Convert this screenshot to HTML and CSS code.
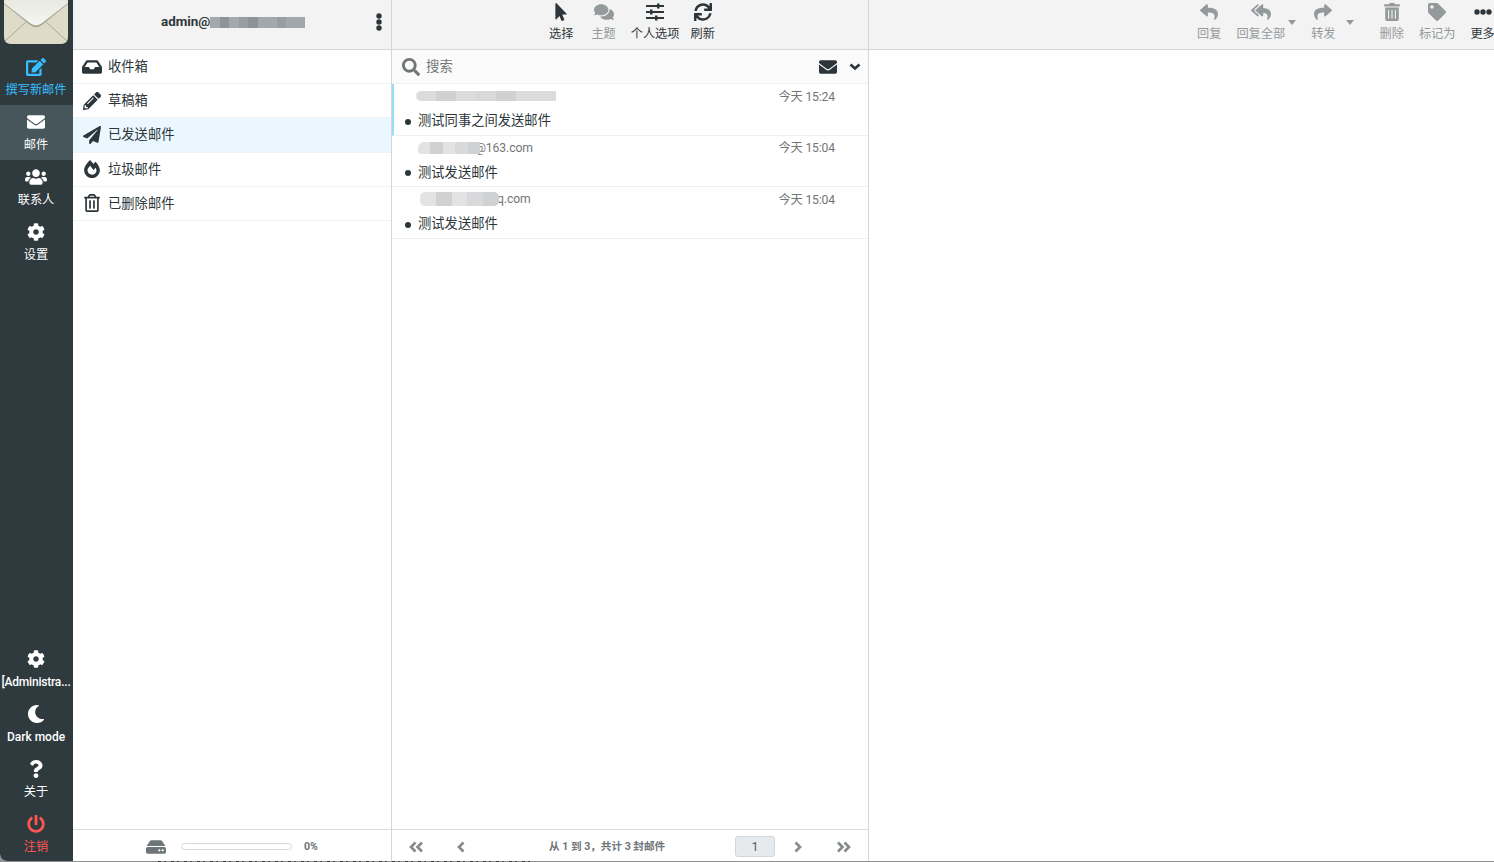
FILE: index.html
```html
<!DOCTYPE html>
<html lang="zh-CN">
<head>
<meta charset="utf-8">
<title>已发送邮件</title>
<link rel="stylesheet" href="styles.css">
</head>
<body>
<svg class="defs" aria-hidden="true">
  <symbol id="edit" viewBox="0 0 576 512"><path d="M402.6 83.2l90.2 90.2c3.8 3.8 3.8 10 0 13.8L274.4 405.6l-92.8 10.3c-12.4 1.4-22.9-9.1-21.5-21.5l10.3-92.8L388.8 83.2c3.8-3.8 10-3.8 13.8 0zm162-22.9l-48.8-48.8c-15.2-15.2-39.9-15.2-55.2 0l-35.4 35.4c-3.8 3.8-3.8 10 0 13.8l90.2 90.2c3.8 3.8 10 3.8 13.8 0l35.4-35.4c15.2-15.3 15.2-40 0-55.2zM384 346.2V448H64V128h229.8c3.2 0 6.2-1.3 8.5-3.5l40-40c7.6-7.6 2.2-20.5-8.5-20.5H48C21.5 64 0 85.5 0 112v352c0 26.5 21.5 48 48 48h352c26.5 0 48-21.5 48-48V306.2c0-10.7-12.9-16-20.5-8.5l-40 40c-2.2 2.3-3.5 5.3-3.5 8.5z"/></symbol>
  <symbol id="envelope" viewBox="0 0 512 512"><path d="M502.3 190.8c3.9-3.1 9.7-.2 9.7 4.7V400c0 26.500-21.500 48-48 48H48c-26.500 0-48-21.500-48-48V195.600c0-5 5.700-7.800 9.700-4.700 22.400 17.400 52.100 39.500 154.100 113.600 21.100 15.400 56.700 47.800 92.200 47.600 35.700.3 72-32.800 92.300-47.600 102-74.100 131.600-96.300 154-113.700zM256 320c23.200.4 56.600-29.200 73.400-41.400 132.700-96.300 142.800-104.700 173.400-128.700 5.800-4.500 9.200-11.500 9.200-18.900v-19c0-26.500-21.500-48-48-48H48c-26.500 0-48 21.500-48 48v19c0 7.400 3.400 14.300 9.200 18.900 30.600 23.900 40.700 32.400 173.400 128.700 16.800 12.200 50.200 41.800 73.400 41.400z"/></symbol>
  <symbol id="users" viewBox="0 0 640 512"><path d="M96 224c35.300 0 64-28.700 64-64s-28.700-64-64-64-64 28.700-64 64 28.700 64 64 64zm448 0c35.300 0 64-28.700 64-64s-28.700-64-64-64-64 28.700-64 64 28.700 64 64 64zm32 32h-64c-17.600 0-33.500 7.100-45.100 18.600 40.300 22.100 68.900 62 75.100 109.400h66c17.700 0 32-14.300 32-32v-32c0-35.300-28.700-64-64-64zm-256 0c61.900 0 112-50.100 112-112S381.900 32 320 32 208 82.100 208 144s50.100 112 112 112zm76.800 32h-8.300c-20.800 10-43.900 16-68.500 16s-47.600-6-68.500-16h-8.300C179.600 288 128 339.600 128 403.200V432c0 26.500 21.500 48 48 48h288c26.500 0 48-21.500 48-48v-28.800c0-63.600-51.600-115.200-115.200-115.200zm-223.700-13.400C161.500 263.100 145.600 256 128 256H64c-35.300 0-64 28.700-64 64v32c0 17.700 14.300 32 32 32h65.900c6.300-47.400 34.900-87.300 75.200-109.400z"/></symbol>
  <symbol id="cog" viewBox="0 0 512 512"><path d="M487.4 315.7l-42.6-24.6c4.3-23.2 4.3-47 0-70.2l42.6-24.6c4.9-2.8 7.1-8.6 5.5-14-11.1-35.6-30-67.8-54.7-94.6-3.8-4.1-10-5.1-14.8-2.3L380.8 110c-17.9-15.4-38.5-27.3-60.8-35.1V25.8c0-5.6-3.9-10.5-9.4-11.7-36.7-8.2-74.3-7.8-109.2 0-5.5 1.2-9.4 6.1-9.4 11.7V75c-22.2 7.9-42.8 19.8-60.8 35.1L88.7 85.5c-4.9-2.8-11-1.9-14.8 2.3-24.7 26.7-43.6 58.9-54.7 94.6-1.7 5.4.6 11.2 5.5 14L67.3 221c-4.3 23.2-4.3 47 0 70.2l-42.6 24.6c-4.9 2.8-7.1 8.6-5.5 14 11.1 35.6 30 67.8 54.7 94.6 3.8 4.1 10 5.1 14.8 2.3l42.6-24.6c17.9 15.4 38.5 27.3 60.8 35.1v49.2c0 5.6 3.9 10.5 9.4 11.7 36.7 8.2 74.3 7.8 109.2 0 5.5-1.2 9.4-6.1 9.4-11.7v-49.2c22.2-7.9 42.8-19.8 60.8-35.1l42.6 24.6c4.900 2.800 11 1.900 14.800-2.300 24.700-26.700 43.600-58.900 54.700-94.600 1.500-5.500-.7-11.300-5.600-14.100zM256 336c-44.100 0-80-35.900-80-80s35.900-80 80-80 80 35.900 80 80-35.900 80-80 80z"/></symbol>
  <symbol id="moon" viewBox="0 0 512 512"><path d="M283.211 512c78.962 0 151.079-35.925 198.857-94.792 7.068-8.708-.639-21.430-11.562-19.350-124.203 23.654-238.262-71.576-238.262-196.954 0-72.222 38.662-138.635 101.498-174.394 9.686-5.512 7.250-20.197-3.756-22.230A258.156 258.156 0 0 0 283.211 0c-141.309 0-256 114.511-256 256 0 141.309 114.511 256 256 256z"/></symbol>
  <symbol id="question" viewBox="0 0 384 512"><path d="M202.021 0C122.202 0 70.503 32.703 29.914 91.026c-7.363 10.580-5.093 25.086 5.178 32.874l43.138 32.709c10.373 7.865 25.132 6.026 33.253-4.148 25.049-31.381 43.630-49.449 82.757-49.449 30.764 0 68.816 19.799 68.816 49.631 0 22.552-18.617 34.134-48.993 51.164-35.423 19.860-82.299 44.576-82.299 106.405V320c0 13.255 10.745 24 24 24h72.471c13.255 0 24-10.745 24-24v-5.773c0-42.860 125.268-44.645 125.268-160.627C377.504 66.256 286.902 0 202.021 0zM192 373.459c-38.196 0-69.271 31.075-69.271 69.271 0 38.195 31.075 69.270 69.271 69.270s69.271-31.075 69.271-69.271-31.075-69.270-69.271-69.270z"/></symbol>
  <symbol id="power" viewBox="0 0 512 512"><path d="M400 54.100c63 45 104 118.600 104 201.900 0 136.800-110.800 247.700-247.500 248C120 504.300 8.200 393 8 256.400 7.900 173.100 48.900 99.300 111.800 54.200c11.700-8.300 28-4.800 35 7.700L162.600 90c5.900 10.500 3.100 23.800-6.600 31-41.500 30.800-68 79.600-68 134.900-.1 92.300 74.500 168.100 168 168.100 91.600 0 168.600-74.200 168-169.100-.3-51.800-24.700-101.800-68.100-134-9.700-7.200-12.400-20.500-6.500-30.900l15.800-28.100c7-12.400 23.200-16.100 34.800-7.800zM296 264V24c0-13.300-10.700-24-24-24h-32c-13.300 0-24 10.700-24 24v240c0 13.300 10.700 24 24 24h32c13.300 0 24-10.700 24-24z"/></symbol>
  <symbol id="inbox" viewBox="0 0 576 512"><path d="M567.938 243.908L462.250 85.374A48.003 48.003 0 0 0 422.311 64H153.689a48 48 0 0 0-39.938 21.374L8.062 243.908A47.994 47.994 0 0 0 0 270.533V400c0 26.510 21.490 48 48 48h480c26.510 0 48-21.490 48-48V270.533a47.994 47.994 0 0 0-8.062-26.625zM162.252 128h251.497l85.333 128H376l-32 64H232l-32-64H76.918l85.334-128z"/></symbol>
  <symbol id="pencil" viewBox="0 0 512 512"><path d="M497.900 142.100l-46.100 46.100c-4.700 4.700-12.300 4.700-17 0l-111-111c-4.700-4.700-4.700-12.300 0-17l46.100-46.100c18.700-18.700 49.100-18.700 67.900 0l60.100 60.100c18.800 18.700 18.800 49.100 0 67.900zM284.200 99.800L21.600 362.400.4 483.900c-2.900 16.400 11.400 30.600 27.800 27.800l121.500-21.300 262.600-262.600c4.700-4.700 4.700-12.300 0-17l-111-111c-4.800-4.700-12.400-4.700-17.100 0zM124.100 339.900c-5.500-5.500-5.500-14.300 0-19.800l154-154c5.500-5.500 14.300-5.500 19.800 0s5.500 14.300 0 19.800l-154 154c-5.500 5.500-14.300 5.500-19.800 0zM88 424h48v36.300l-64.500 11.300-31.100-31.100L51.700 376H88v48z"/></symbol>
  <symbol id="plane" viewBox="0 0 512 512"><path d="M476 3.200L12.500 270.600c-18.100 10.400-15.800 35.600 2.200 43.200L121 358.400l287.300-253.200c5.500-4.900 13.300 2.600 8.600 8.300L176 407v80.500c0 23.600 28.500 32.900 42.500 15.800L282 426l124.600 52.200c14.200 6 30.400-2.900 33-18.200l72-432C515 7.800 493.300-6.800 476 3.200z"/></symbol>
  <symbol id="fire" viewBox="0 0 448 512"><path d="M323.560 51.200c-20.800 19.300-39.580 39.590-56.220 59.970C240.080 73.620 206.280 35.530 168 0 69.740 91.170 0 209.960 0 281.600 0 408.850 100.290 512 224 512s224-103.150 224-230.400c0-53.270-51.980-163.140-124.440-230.400zm-19.470 340.650C282.430 407.010 255.720 416 226.860 416 154.710 416 96 368.260 96 290.750c0-38.610 24.310-72.630 72.790-130.750 6.930 7.980 98.830 125.340 98.830 125.340l58.630-66.880c4.140 6.850 7.910 13.550 11.270 19.970 27.350 52.190 15.810 118.970-33.430 153.420z"/></symbol>
  <symbol id="trash-o" viewBox="0 0 448 512"><path d="M268 416h24a12 12 0 0 0 12-12V188a12 12 0 0 0-12-12h-24a12 12 0 0 0-12 12v216a12 12 0 0 0 12 12zM432 80h-82.410l-34-56.700A48 48 0 0 0 274.410 0H173.590a48 48 0 0 0-41.160 23.300L98.410 80H16A16 16 0 0 0 0 96v16a16 16 0 0 0 16 16h16v336a48 48 0 0 0 48 48h288a48 48 0 0 0 48-48V128h16a16 16 0 0 0 16-16V96a16 16 0 0 0-16-16zM171.840 50.910A6 6 0 0 1 177 48h94a6 6 0 0 1 5.150 2.910L293.610 80H154.390zM368 464H80V128h288zm-212-48h24a12 12 0 0 0 12-12V188a12 12 0 0 0-12-12h-24a12 12 0 0 0-12 12v216a12 12 0 0 0 12 12z"/></symbol>
  <symbol id="trash" viewBox="0 0 448 512"><path d="M32 464a48 48 0 0 0 48 48h288a48 48 0 0 0 48-48V128H32zm272-256a16 16 0 0 1 32 0v224a16 16 0 0 1-32 0zm-96 0a16 16 0 0 1 32 0v224a16 16 0 0 1-32 0zm-96 0a16 16 0 0 1 32 0v224a16 16 0 0 1-32 0zM432 32H312l-9.400-18.700A24 24 0 0 0 281.100 0H166.800a23.720 23.720 0 0 0-21.400 13.300L136 32H16A16 16 0 0 0 0 48v32a16 16 0 0 0 16 16h416a16 16 0 0 0 16-16V48a16 16 0 0 0-16-16z"/></symbol>
  <symbol id="pointer" viewBox="0 0 320 512"><path d="M302.189 329.126H196.105l55.831 135.993c3.889 9.428-.555 19.999-9.444 23.999l-49.165 21.427c-9.165 4-19.443-.571-23.332-9.714l-53.053-129.136-86.664 89.138C18.729 472.710 0 463.554 0 447.977V18.299C0 1.899 19.921-6.096 30.277 5.443l284.412 292.542c11.472 11.179 3.007 31.141-12.500 31.141z"/></symbol>
  <symbol id="comments" viewBox="0 0 576 512"><path d="M416 192c0-88.400-93.100-160-208-160S0 103.600 0 192c0 34.300 14.100 65.900 38 92-13.400 30.200-35.500 54.200-35.800 54.500-2.200 2.300-2.800 5.700-1.500 8.700S4.800 352 8 352c36.600 0 66.900-12.300 88.700-25 32.200 15.700 70.300 25 111.300 25 114.900 0 208-71.600 208-160zm122 220c23.900-26 38-57.700 38-92 0-66.900-53.500-124.200-129.300-148.100.9 6.600 1.300 13.300 1.300 20.100 0 105.900-107.700 192-240 192-10.800 0-21.300-.8-31.700-1.900C207.800 439.600 281.800 480 368 480c41 0 79.100-9.200 111.300-25 21.800 12.700 52.100 25 88.700 25 3.200 0 6.100-1.900 7.300-4.800 1.300-2.900.7-6.300-1.500-8.700-.3-.3-22.400-24.200-35.800-54.500z"/></symbol>
  <symbol id="sliders" viewBox="0 0 18 18"><path d="M0 2h18v2H0zM0 8h18v2H0zM0 14h18v2H0zM11 .5h2.500v5H11zM4 6.500h2.500v5H4zM9 12.500h2.500v5H9z"/></symbol>
  <symbol id="sync" viewBox="0 0 512 512"><path d="M440.650 12.570l4 82.770A247.160 247.160 0 0 0 255.830 8C134.730 8 33.910 94.920 12.290 209.820A12 12 0 0 0 24.090 224h49.050a12 12 0 0 0 11.670-9.260 175.910 175.910 0 0 1 317-56.940l-101.460-4.860a12 12 0 0 0-12.570 12v47.410a12 12 0 0 0 12 12H500a12 12 0 0 0 12-12V12a12 12 0 0 0-12-12h-47.370a12 12 0 0 0-11.980 12.570zM255.830 432a175.610 175.610 0 0 1-146-77.800l101.800 4.870a12 12 0 0 0 12.570-12v-47.400a12 12 0 0 0-12-12H12a12 12 0 0 0-12 12V500a12 12 0 0 0 12 12h47.350a12 12 0 0 0 12-12.600l-4.150-82.570A247.170 247.170 0 0 0 255.830 504c121.110 0 221.930-86.920 243.550-201.820a12 12 0 0 0-11.800-14.180h-49.050a12 12 0 0 0-11.670 9.260A175.860 175.860 0 0 1 255.830 432z"/></symbol>
  <symbol id="reply" viewBox="0 0 512 512"><path d="M8.309 189.836L184.313 37.851C199.719 24.546 224 35.347 224 56.015v80.053c160.629 1.839 288 34.032 288 186.258 0 61.441-39.581 122.309-83.333 154.132-13.653 9.931-33.111-2.533-28.077-18.631 45.344-145.012-21.507-183.510-176.590-185.742V360c0 20.700-24.300 31.453-39.687 18.164l-176.004-152c-11.071-9.562-11.086-26.753 0-36.328z"/></symbol>
  <symbol id="reply-all" viewBox="0 0 576 512"><path d="M136.309 189.836L312.313 37.851C327.720 24.546 352 35.348 352 56.015v82.763c129.182 10.231 224 52.212 224 183.548 0 61.441-39.582 122.309-83.333 154.132-13.653 9.931-33.111-2.533-28.077-18.631 38.512-123.162-3.922-169.482-112.590-182.015v84.175c0 20.701-24.300 31.453-39.687 18.164L136.309 226.164c-11.071-9.561-11.086-26.753 0-36.328zm-128 36.328L184.313 378.150C199.700 391.439 224 380.687 224 359.986v-15.818l-108.606-93.785A55.960 55.960 0 0 1 96 207.998a55.953 55.953 0 0 1 19.393-42.380L224 71.832V56.015c0-20.667-24.280-31.469-39.687-18.164L8.309 189.836c-11.086 9.575-11.071 26.767 0 36.328z"/></symbol>
  <symbol id="tag" viewBox="0 0 512 512"><path d="M0 252.118V48C0 21.490 21.490 0 48 0h204.118a48 48 0 0 1 33.941 14.059l211.882 211.882c18.745 18.745 18.745 49.137 0 67.882L293.823 497.941c-18.745 18.745-49.137 18.745-67.882 0L14.059 286.059A48 48 0 0 1 0 252.118zM112 64c-26.510 0-48 21.490-48 48s21.490 48 48 48 48-21.490 48-48-21.490-48-48-48z"/></symbol>
  <symbol id="dots" viewBox="0 0 18 18"><circle cx="3" cy="9" r="2.700"/><circle cx="9" cy="9" r="2.700"/><circle cx="15" cy="9" r="2.700"/></symbol>
  <symbol id="search" viewBox="0 0 512 512"><path d="M505 442.700L405.300 343c-4.500-4.500-10.600-7-17-7H372c27.600-35.300 44-79.700 44-128C416 93.100 322.900 0 208 0S0 93.100 0 208s93.100 208 208 208c48.300 0 92.700-16.400 128-44v16.300c0 6.400 2.500 12.500 7 17l99.700 99.700c9.400 9.400 24.600 9.400 33.900 0l28.300-28.300c9.400-9.400 9.400-24.600.1-34zM208 336c-70.700 0-128-57.200-128-128 0-70.700 57.200-128 128-128 70.700 0 128 57.200 128 128 0 70.700-57.200 128-128 128z"/></symbol>
  <symbol id="hdd" viewBox="0 0 576 512"><path d="M576 304v96c0 26.510-21.490 48-48 48H48c-26.510 0-48-21.490-48-48v-96c0-26.510 21.490-48 48-48h480c26.510 0 48 21.490 48 48zm-48-80a79.557 79.557 0 0 1 30.777 6.165L462.250 85.374A48.003 48.003 0 0 0 422.311 64H153.689a48 48 0 0 0-39.938 21.374L17.223 230.165A79.557 79.557 0 0 1 48 224h480zm-48 96c-17.673 0-32 14.327-32 32s14.327 32 32 32 32-14.327 32-32-14.327-32-32-32zm-96 0c-17.673 0-32 14.327-32 32s14.327 32 32 32 32-14.327 32-32-14.327-32-32-32z"/></symbol>
  <symbol id="left" viewBox="0 0 8 12"><path class="line" d="M6.500 1.500L2 6l4.500 4.500"/></symbol>
  <symbol id="left2" viewBox="0 0 15 12"><path class="line" d="M6.500 1.500L2 6l4.500 4.500M13 1.500L8.500 6l4.500 4.500"/></symbol>
</svg>
<div class="app">
  <nav class="side">
    <div class="logo">
      <svg width="66" height="45" viewBox="0 0 66 45">
        <defs><linearGradient id="flap" x1="0" y1="0" x2="0" y2="1"><stop offset="0" stop-color="#e9e9e2"/><stop offset="1" stop-color="#f6f6f2"/></linearGradient></defs>
        <path d="M1 0h64v37q0 7-7 7H8q-7 0-7-7z" fill="#dedcc8"/>
        <path d="M2 41L23 22M64 41L43 22" stroke="#aaa998" fill="none"/>
        <path d="M1 4L27 25q6 4.500 12 0L65 4V0H1z" fill="#aaa998"/>
        <path d="M1 3L27 23q6 4.500 12 0L65 3V0H1z" fill="url(#flap)"/>
      </svg>
    </div>
    <a class="item compose"><svg class="i20"><use href="#edit"/></svg><span>撰写新邮件</span></a>
    <a class="item active"><svg class="i18"><use href="#envelope"/></svg><span>邮件</span></a>
    <a class="item"><svg class="i22"><use href="#users"/></svg><span>联系人</span></a>
    <a class="item"><svg class="i18"><use href="#cog"/></svg><span>设置</span></a>
    <div class="grow"></div>
    <a class="item"><svg class="i18"><use href="#cog"/></svg><span class="latin tight">[Administra...</span></a>
    <a class="item"><svg class="i18"><use href="#moon"/></svg><span class="latin">Dark mode</span></a>
    <a class="item"><svg class="i18"><use href="#question"/></svg><span>关于</span></a>
    <a class="item logout"><svg class="i18"><use href="#power"/></svg><span>注销</span></a>
  </nav>
  <section class="folders">
    <header class="bar account">
      <b>admin@</b>
      <span class="mosaic m-head"><i></i><i></i><i></i><i></i><i></i><i></i><i></i><i></i><i></i><i></i></span>
      <svg class="kebab" viewBox="0 0 6 18"><circle cx="3" cy="3" r="2.700"/><circle cx="3" cy="9" r="2.700"/><circle cx="3" cy="15" r="2.700"/></svg>
    </header>
    <ul class="tree">
      <li><svg class="i20"><use href="#inbox"/></svg><span>收件箱</span></li>
      <li><svg class="i18"><use href="#pencil"/></svg><span>草稿箱</span></li>
      <li class="sel"><svg class="i18"><use href="#plane"/></svg><span>已发送邮件</span></li>
      <li><svg class="i18"><use href="#fire"/></svg><span>垃圾邮件</span></li>
      <li><svg class="i18"><use href="#trash-o"/></svg><span>已删除邮件</span></li>
    </ul>
    <footer class="foot quota"><svg class="i20"><use href="#hdd"/></svg><span class="meter"></span><b>0%</b></footer>
  </section>
  <section class="messages">
    <header class="bar tools">
      <a class="tool"><svg class="i18"><use href="#pointer"/></svg>选择</a>
      <a class="tool off"><svg class="i20"><use href="#comments"/></svg>主题</a>
      <a class="tool"><svg class="i18"><use href="#sliders"/></svg>个人选项</a>
      <a class="tool"><svg class="i18"><use href="#sync"/></svg>刷新</a>
    </header>
    <div class="search"><svg class="i18"><use href="#search"/></svg><span>搜索</span><svg class="i18 unread"><use href="#envelope"/></svg><svg class="chev" viewBox="0 0 12 8"><path class="line" d="M1.500 1.500L6 5.500l4.500-4"/></svg></div>
    <ul class="list">
      <li class="focus"><div class="meta"><span class="mosaic m1"><i></i><i></i><i></i><i></i><i></i><i></i><i></i></span><time>今天 15:24</time></div><div class="subject">测试同事之间发送邮件</div></li>
      <li><div class="meta"><span class="mosaic m2"><i></i><i></i><i></i><i></i><i></i></span><span class="addr">@163.com</span><time>今天 15:04</time></div><div class="subject">测试发送邮件</div></li>
      <li><div class="meta"><span class="mosaic m3"><i></i><i></i><i></i><i></i><i></i></span><span class="addr">q.com</span><time>今天 15:04</time></div><div class="subject">测试发送邮件</div></li>
    </ul>
    <footer class="foot pager">
      <svg class="dbl"><use href="#left2"/></svg><svg class="sgl"><use href="#left"/></svg>
      <b>从 1 到 3，共计 3 封邮件</b><span class="page">1</span>
      <svg class="sgl flip"><use href="#left"/></svg><svg class="dbl flip"><use href="#left2"/></svg>
    </footer>
  </section>
  <section class="preview">
    <header class="bar actions">
      <a class="tool off"><svg class="i18"><use href="#reply"/></svg>回复</a>
      <a class="tool off"><svg class="i20"><use href="#reply-all"/></svg>回复全部</a>
      <i class="caret"></i>
      <a class="tool off fwd"><svg class="i18 flip"><use href="#reply"/></svg>转发</a>
      <i class="caret"></i>
      <a class="tool off del"><svg class="i18"><use href="#trash"/></svg>删除</a>
      <a class="tool off mark"><svg class="i18"><use href="#tag"/></svg>标记为</a>
      <a class="tool more"><svg class="i18"><use href="#dots"/></svg>更多</a>
    </header>
  </section>
</div>
<div class="behind"></div>
</body>
</html>
```

FILE: styles.css
```css
* { box-sizing: border-box; }
body { margin: 0; background: #8f9192; color: #2c363a; font: 12.2px/18px Roboto, "Noto Sans CJK SC", sans-serif; overflow: hidden; }
svg { fill: currentColor; flex: none; display: block; }
ul { list-style: none; margin: 0; padding: 0; }
.defs { position: absolute; width: 0; height: 0; }
.line { fill: none; stroke: currentColor; stroke-width: 2.7; }
.i18 { width: 18px; height: 18px; }
.i20 { width: 20px; height: 18px; }
.i22 { width: 22px; height: 18px; }
.flip { transform: scaleX(-1); }
.app { display: grid; grid-template-columns: 73px 319px 477px 1fr; height: 861px; background: #fff; border-bottom-left-radius: 7px; overflow: hidden; }
/* sliver of the window behind, showing under the page edge */
.behind { width: 372px; height: 1px; margin-left: 158px; background: repeating-linear-gradient(90deg, #333 0 3px, #8f9192 3px 6px, #444 6px 8px, #8f9192 8px 13px); }

.side { display: flex; flex-direction: column; background: #2f3a3f; color: #fff; }
.logo { height: 50px; padding-left: 3px; }
.item { height: 55px; display: flex; flex-direction: column; align-items: center; padding: 8px 1px 0 0; white-space: nowrap; }
.item span { margin-top: 5px; }
.item .latin { font-size: 12px; font-weight: 500; }
.item .tight { letter-spacing: -.2px; }
.compose { color: #37beff; }
.active { background: #47565b; }
.logout { color: #ff5552; }
.grow { flex: 1; }
.side .item:last-child { height: 54px; }

.folders, .messages { display: flex; flex-direction: column; border-right: 1px solid #d2d8da; }
.bar { height: 50px; background: #f3f3f3; border-bottom: 1px solid #d5d8d9; display: flex; }
.account { align-items: center; padding: 0 9px 6px 88px; }
.account b { font-weight: 700; font-size: 13.4px; }
.kebab { width: 6px; height: 18px; margin-left: auto; }
.tree { flex: 1; }
.tree li { height: 34.2px; border-bottom: 1px solid #f0f2f3; display: flex; align-items: center; gap: 6px; padding-left: 9px; font-size: 13.3px; }
.tree span { padding-top: 1px; }
.tree .i18 { margin: 0 1px; }
.tree .sel { background: #eaf7fe; }
.foot { height: 32px; border-top: 1px solid #d8dee0; display: flex; align-items: center; color: #6e7578; padding-top: 2px; }
.quota { padding-left: 73px; }
.meter { width: 111px; height: 7px; border: 1px solid #d5dadd; border-radius: 4px; margin: 0 12px 0 15px; }
.quota b, .pager b { font-weight: 700; font-size: 10.6px; }

.tool { display: flex; flex-direction: column; align-items: center; padding-top: 4px; gap: 4px; white-space: nowrap; }
.tool svg { margin-top: -1px; }
.off { color: #949a9c; }
.tools { padding-left: 157px; }
.tools .tool + .tool { margin-left: 18px; }
.tools .tool:nth-child(3) { margin-left: 15px; }
.tools .tool:nth-child(4) { margin-left: 11px; }
.search { height: 34px; background: #fbfbfb; border-bottom: 1px solid #f0f2f3; display: flex; align-items: center; padding: 0 7px 0 10px; color: #737677; font-size: 13.4px; }
.search span { margin-left: 6px; }
.unread { margin-left: auto; margin-right: 12px; color: #2c363a; }
.chev { width: 12px; height: 8px; color: #2c363a; }
.list { flex: 1; }
.list li { height: 51.5px; border-bottom: 1px solid #edf1f3; padding: 3px 33px 0 24px; }
.list .focus { border-left: 2px solid #9bdcfb; padding-left: 22px; }
.meta { height: 18px; display: flex; align-items: center; color: #737677; }
.meta time { margin-left: auto; padding-top: 1px; letter-spacing: -.15px; }
.addr { font-size: 12.2px; letter-spacing: -.1px; }
.subject { margin-top: 6px; height: 20px; line-height: 20px; font-size: 13.3px; padding-left: 2px; display: flex; align-items: center; }
.subject::before { content: ""; width: 6px; height: 6px; border-radius: 50%; background: #2c363a; margin: 1px 7px 0 -13px; }

.mosaic { position: relative; display: flex; height: 10px; overflow: hidden; }
.mosaic i { flex: 1; background: #dcdcdc; }
.mosaic i:nth-child(3n+2) { background: #d0d1d2; }
.mosaic i:nth-child(4n) { background: #d7d9da; }
.m-head { width: 95px; height: 11px; margin-top: 1px; }
.m-head i { background: #a3a8ac; }
.m-head i:nth-child(3n+2) { background: #8d9497; }
.m-head i:nth-child(4n) { background: #979da5; }
.m1 { width: 140px; border-radius: 5px 0 0 5px; }
.m2 { width: 62px; height: 12px; margin: 0 -5px 0 2px; border-radius: 6px 0 0 3px; }
.m3 { width: 79px; height: 14px; margin: 0 -2px 0 4px; border-radius: 5px; }
.m3 i, .m2 i { background: #e3e3e3; }

.pager { padding: 2px 17px 0; }
.dbl { width: 15px; height: 12px; color: #858b8e; }
.sgl { width: 8px; height: 12px; color: #858b8e; }
.pager .dbl + .sgl { margin-left: 33px; }
.pager b { margin-left: 84px; }
.page { margin: 0 19px 0 auto; width: 40px; height: 21px; background: #e7eaed; border: 1px solid #d0d6da; border-radius: 3px; text-align: center; font-size: 12.5px; line-height: 20px; color: #555c60; }
.pager .sgl + .dbl { margin-left: 34px; }

.actions { padding-left: 328px; overflow: hidden; }
.actions .tool { flex: none; }
.actions .tool:nth-child(2) { margin-left: 15px; }
.caret { flex: none; border: 4px solid transparent; border-top: 5px solid #949a9c; border-bottom: 0; height: 5px; margin: 20px 0 0 3px; }
.fwd { margin-left: 15px; }
.fwd + .caret { margin-left: 10px; }
.del { margin-left: 26px; }
.mark { margin-left: 15px; }
.more { margin-left: 15px; }
```
